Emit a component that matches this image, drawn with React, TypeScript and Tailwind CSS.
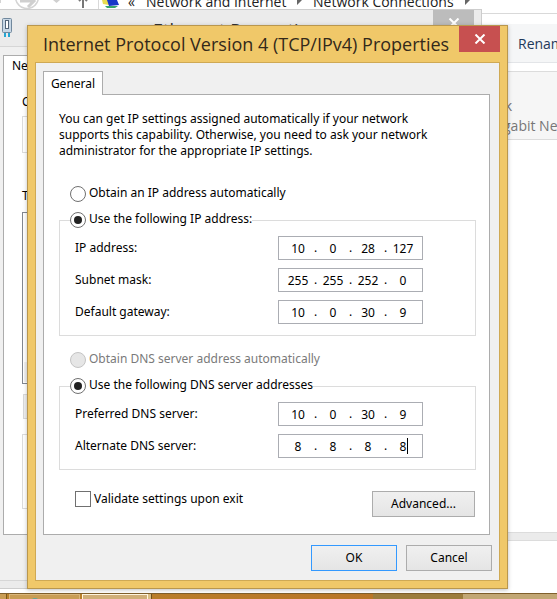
import React from "react";

const ui = "font-['Noto_Sans',sans-serif] text-[12px]";

type AddressProps = { label: string; octets: string[]; caret?: boolean };

function AddressRow({ label, octets, caret }: AddressProps) {
  return (
    <div role="group" aria-label={label} className="flex h-6 items-center justify-between pr-[52px] pl-[15px]">
      <span>{label}</span>
      <div className="flex h-6 w-[145px] items-center border border-[#abadb3] bg-white pl-[5px]">
        {octets.map((value, i) => (
          <React.Fragment key={i}>
            {i > 0 && <span className="w-[7px] text-center">.</span>}
            <span className="relative flex">
              <input
                aria-label={`${label} ${i + 1}`}
                defaultValue={value}
                maxLength={3}
                className="h-5 w-7 bg-transparent text-center outline-none"
              />
              {caret && i === 3 && <span className="absolute top-0.5 right-[9px] h-4 w-px bg-black" />}
            </span>
          </React.Fragment>
        ))}
      </div>
    </div>
  );
}

type RadioProps = { name: string; label: string; checked?: boolean; disabled?: boolean };

function RadioOption({ name, label, checked, disabled }: RadioProps) {
  return (
    <label className={`flex h-4 w-fit items-center gap-[3px] bg-white ${disabled ? "text-[#7a7a7a]" : ""}`}>
      <input
        type="radio"
        name={name}
        defaultChecked={checked}
        disabled={disabled}
        className="size-4 shrink-0 appearance-none rounded-full border border-[#707070] bg-white checked:bg-[#222] checked:bg-clip-content checked:p-[3px] disabled:border-[#c4c4c4] disabled:bg-[#e6e6e6]"
      />
      <span className="-mt-0.5 leading-4">{label}</span>
    </label>
  );
}

function Cross() {
  return (
    <svg viewBox="0 0 12 10" className="h-2.5 w-3" aria-hidden="true">
      <path d="M1.5 .5 10.5 9.5M10.5 .5 1.5 9.5" stroke="white" strokeWidth="2" />
    </svg>
  );
}

function PushButton({ label, primary, wide }: { label: string; primary?: boolean; wide?: boolean }) {
  return (
    <button
      className={`h-[26px] border bg-linear-to-b from-[#f0f0f0] to-[#e5e5e5] ${wide ? "w-[103px]" : "w-[86px]"} ${primary ? "border-[#3399ff]" : "border-[#acacac]"}`}
    >
      {label}
    </button>
  );
}

function Explorer() {
  return (
    <section className="absolute inset-x-0 top-0 bottom-1.5 overflow-hidden bg-white font-['Open_Sans',sans-serif]">
      <div className="relative h-[14px] overflow-hidden border-b border-[#d9d9d9] text-[14px] text-[#222]">
        <svg viewBox="0 0 130 9" className="absolute top-0 left-0 h-[9px] w-[130px]" aria-hidden="true">
          <path d="M0 0V3" stroke="#d4d4d4" strokeWidth="2" />
          <circle cx="27" cy="-3" r="11.5" fill="none" stroke="#d4d4d4" strokeWidth="1.5" />
          <path d="M20 1H34M28-5 34 1 28 7" fill="none" stroke="#cfcfcf" strokeWidth="3" />
          <path d="M53 0H60L56.500 3Z" fill="#d0d0d0" />
          <path d="M83 0V8M79 1 83-3 87 1" fill="none" stroke="#777" strokeWidth="2" />
          <path d="M98.500 0V9" stroke="#d9d9d9" />
          <path d="M102 0H109V5L103 4Z" fill="#e7dc50" />
          <path d="M107 0H117L119 5 109 6Z" fill="#1738c8" />
          <path d="M105 6H118L115 8H107Z" fill="#35a56b" />
        </svg>
        <span className="absolute -top-2 left-[128px] leading-5">«</span>
        <span className="absolute -top-2 left-[146px] leading-5 whitespace-nowrap">Network and Internet</span>
        <span className="absolute -top-2 left-[313px] leading-5 whitespace-nowrap">Network Connections</span>
        <svg viewBox="0 0 180 6" className="absolute top-0 left-[296px] h-1.5 w-[180px]" aria-hidden="true">
          <path d="M1 0H6L1 5ZM169 0H174L169 5Z" fill="#666" />
        </svg>
      </div>
      <div className="mt-[10px] flex h-[39px] items-center justify-end overflow-hidden border-b border-[#e3e5e8] bg-[#f5f6f7] text-[14px] text-[#1e395b]">
        <span className="-mr-[26px] w-[65px]">Rename</span>
      </div>
      <div className="mt-2 flex h-[69px] flex-col items-end overflow-hidden border-y border-[#dcdcdc] bg-[#f6f6f6] pt-6 text-[14px] leading-5 whitespace-nowrap text-[#777]">
        <span className="w-[58px]">rk</span>
        <span className="w-[54px]">gabit Network</span>
      </div>
      <div className="absolute inset-x-0 bottom-[52px] h-[9px] border-y border-[#dcdcdc] bg-[#ebebeb]" />
    </section>
  );
}

function BackDialog() {
  return (
    <section className={`absolute top-[9px] right-[75px] bottom-[10px] left-0 overflow-hidden border border-l-0 border-[#cdcdcd] bg-[#ebebeb] leading-5 ${ui}`}>
      <header className="flex h-9 items-start justify-between">
        <svg viewBox="0 0 12 20" className="mt-2 ml-0.5 h-5 w-3" aria-hidden="true">
          <rect x="0.5" y="0.5" width="9" height="14" rx="1" fill="#c8d7e5" stroke="#71889d" />
          <rect x="3.5" y="2.500" width="3" height="8" fill="#fff" stroke="#536578" />
          <path d="M3 15V19M7 15V19" stroke="#25a5d2" strokeWidth="2" />
        </svg>
        <h2 className="ml-[139px] flex-1 pt-1.5 font-['Open_Sans',sans-serif] text-[18px] leading-7 text-[#333]">Ethernet Properties</h2>
        <button aria-label="Close" className="mr-[7px] flex h-[26px] w-[41px] items-center justify-center bg-[#bcbcbc]">
          <Cross />
        </button>
      </header>
      <div className="h-[535px] border-y border-[#d6d6d6] bg-[#f0f0f0] pt-2 pl-[3px]">
        <div className="h-[480px] border border-[#acacac] bg-white pl-[18px]">
          <div className="-ml-2.5">Networking</div>
          <div className="mt-4">Connect using:</div>
          <div className="mt-1 h-[37px] border border-[#dcdcdc]" />
          <div className="mt-[33px]">This connection uses the following items:</div>
          <div className="mt-1.5 flex h-[172px] items-end border border-[#828790] p-px">
            <div className="h-5 w-full bg-[#f0f0f0]" />
          </div>
          <div className="mt-2.5 ml-px h-[25px] border border-[#d9d9d9] bg-[#efefef]" />
          <div className="mt-[15px] h-[75px] border border-[#dcdcdc]" />
        </div>
      </div>
    </section>
  );
}

function Taskbar() {
  return (
    <footer className="absolute inset-x-0 bottom-0 flex h-1.5 border-t border-[#80602c] bg-linear-to-r from-[#b9822b] to-[#b97026]">
      <div className="w-[7px] border-r border-[#7b5719] bg-[#c99d55]" />
      <div className="ml-0.5 flex w-[71px] justify-center border border-b-0 border-[#dab77b] bg-[#c99d55] pr-5">
        <div className="mt-[3px] h-1 w-2 rounded-t bg-[#62a69a]" />
      </div>
      <div className="ml-0.5 w-[66px] border border-b-0 border-[#fff5de] bg-[#d0ae78]" />
      <div className="w-1 border-r border-[#71511a] bg-[#dbbd83]" />
      <div className="ml-auto w-[90px] bg-[#9c7c3c]" />
      <div className="w-[94px] bg-[#c2a774]" />
    </footer>
  );
}

export default function App() {
  return (
    <main className="relative h-screen min-h-[599px] overflow-hidden bg-white">
      <Explorer />
      <BackDialog />
      <Taskbar />
      <section
        role="dialog"
        aria-labelledby="dialog-title"
        className={`absolute top-[25px] right-[49px] left-[27px] border border-[#b9974e] bg-[#f0c869] px-[7px] pb-[7px] text-black shadow-[0_1px_4px_rgba(0,0,0,0.25)] ${ui}`}
      >
        <header className="flex h-9 items-start justify-between pl-2">
          <h1 id="dialog-title" className="font-['Open_Sans',sans-serif] text-[18px] leading-9 whitespace-nowrap text-[#33291a]">
            Internet Protocol Version 4 (TCP/IPv4) Properties
          </h1>
          <button aria-label="Close" className="flex h-[26px] w-[41px] shrink-0 items-center justify-center bg-[#c75050]">
            <Cross />
          </button>
        </header>
        <form className="border border-[#cfa954] bg-[#f0f0f0] px-[7px] pt-2 pb-[9px]" onSubmit={(e) => e.preventDefault()}>
          <div role="tablist" className="flex">
            <button role="tab" aria-selected="true" className="relative z-10 -mb-px h-6 w-[60px] border border-b-0 border-[#acacac] bg-white">
              General
            </button>
          </div>
          <div role="tabpanel" className="mr-0.5 border border-[#acacac] bg-white pt-4 pr-[13px] pb-[17px] pl-[15px]">
            <p className="leading-4">
              You can get IP settings assigned automatically if your network
              <br />
              supports this capability. Otherwise, you need to ask your network
              <br />
              administrator for the appropriate IP settings.
            </p>
            <div className="mt-[27px] pl-[11px]">
              <RadioOption name="ip" label="Obtain an IP address automatically" />
            </div>
            <div className="mt-[18px] flex flex-col gap-2 border border-[#dcdcdc] pb-[11px]">
              <div className="-mt-[9px] pl-2.5">
                <RadioOption name="ip" label="Use the following IP address:" checked />
              </div>
              <AddressRow label="IP address:" octets={["10", "0", "28", "127"]} />
              <AddressRow label="Subnet mask:" octets={["255", "255", "252", "0"]} />
              <AddressRow label="Default gateway:" octets={["10", "0", "30", "9"]} />
            </div>
            <div className="mt-4 pl-[11px]">
              <RadioOption name="dns" label="Obtain DNS server address automatically" disabled />
            </div>
            <div className="mt-[18px] flex flex-col gap-2 border border-[#dcdcdc] pb-[11px]">
              <div className="-mt-[9px] pl-2.5">
                <RadioOption name="dns" label="Use the following DNS server addresses" checked />
              </div>
              <AddressRow label="Preferred DNS server:" octets={["10", "0", "30", "9"]} />
              <AddressRow label="Alternate DNS server:" octets={["8", "8", "8", "8"]} caret />
            </div>
            <div className="mt-[21px] flex items-start justify-between pr-px pl-4">
              <label className="flex items-center gap-[3px]">
                <input type="checkbox" className="size-4 appearance-none border border-[#707070] bg-white checked:bg-[#222]" />
                <span className="leading-4">Validate settings upon exit</span>
              </label>
              <PushButton label="Advanced..." wide />
            </div>
          </div>
          <div className="mt-2.5 flex justify-end gap-[9px]">
            <PushButton label="OK" primary />
            <PushButton label="Cancel" />
          </div>
        </form>
      </section>
    </main>
  );
}
